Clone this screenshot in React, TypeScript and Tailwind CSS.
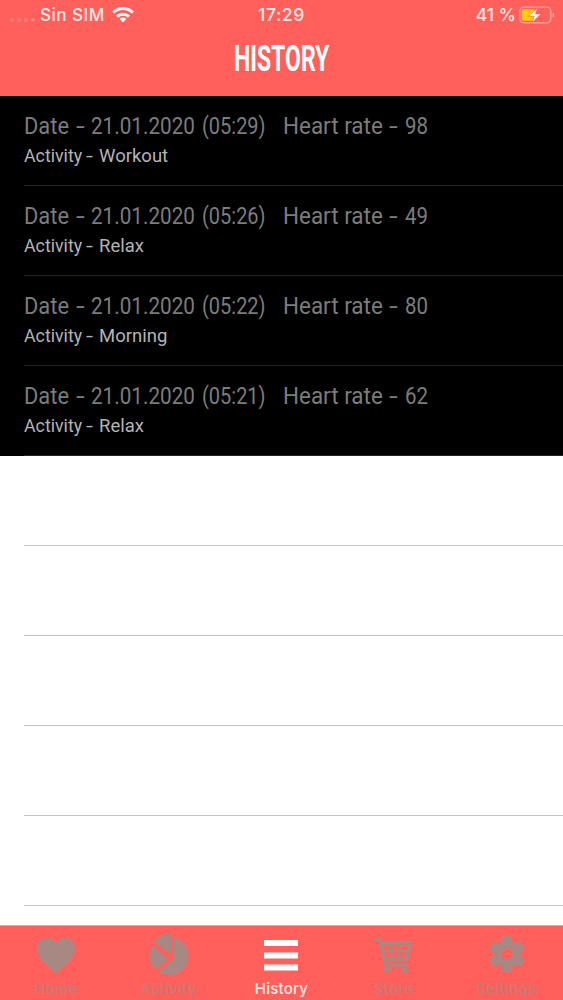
import type { ReactNode } from "react";

type Entry = { date: string; time: string; rate: number; activity: string };

const entries: Entry[] = [
  { date: "21.01.2020", time: "05:29", rate: 98, activity: "Workout" },
  { date: "21.01.2020", time: "05:26", rate: 49, activity: "Relax" },
  { date: "21.01.2020", time: "05:22", rate: 80, activity: "Morning" },
  { date: "21.01.2020", time: "05:21", rate: 62, activity: "Relax" },
];

function StatusBar() {
  return (
    <div className="grid h-[30px] grid-cols-3 items-center font-['Inter',sans-serif] text-[17px] font-medium text-[#ffe9e5]">
      <div className="flex items-center pl-[10px]">
        <div className="mt-[10px] flex gap-[3px]">
          {[0, 1, 2, 3].map((i) => (
            <span key={i} className="size-[4px] rounded-full bg-[#ff8078]" />
          ))}
        </div>
        <span className="ml-[5px] w-[66px] whitespace-nowrap pt-px tracking-[0.5px]">Sin SIM</span>
        <svg viewBox="0 0 22 16" className="ml-[6px] h-[16px] w-[22px]" fill="none" stroke="#fff4f1" strokeWidth="3">
          <path d="M1.2 5.600a14 14 0 0 1 19.600 0" />
          <path d="M5 9.600a8.600 8.600 0 0 1 12 0" />
          <path d="M11 15.500 7.600 12a4.800 4.800 0 0 1 6.800 0Z" fill="#fff4f1" stroke="none" />
        </svg>
      </div>
      <span className="text-center text-[17.5px] tracking-[0.6px]">17:29</span>
      <div className="flex items-center justify-end pr-[8px]">
        <span className="whitespace-nowrap text-[17.5px]">41 %</span>
        <svg viewBox="0 0 36 18" className="ml-[3px] h-[18px] w-[36px]">
          <rect x="0.8" y="1.2" width="31" height="15.600" rx="4" fill="none" stroke="#ffaaa0" strokeWidth="1.2" />
          <rect x="2.800" y="3.200" width="13" height="11.600" rx="2" fill="#ffcc0a" />
          <path d="M33.600 6.500c2 .8 2 4.200 0 5Z" fill="#ffaaa0" />
          <path d="M18.500 2 9.500 10.200h5.700L13 16.500l9.200-8.600h-5.800Z" fill="#fff" stroke="#ff6059" strokeWidth="0.7" />
        </svg>
      </div>
    </div>
  );
}

function HistoryRow({ entry }: { entry: Entry }) {
  return (
    <li className="h-[90px] bg-black pl-[24px] font-['Roboto',sans-serif]">
      <div className="h-full border-b border-[#242424] pt-[16px]">
        <div className="flex h-[29px] items-center whitespace-nowrap text-[23.5px] text-[#7c7c7c]">
          <span className="w-[52px]">
            <span className="inline-block origin-left scale-x-[0.93]">Date</span>
          </span>
          <span className="w-[15px]">
            <span className="inline-block origin-left scale-x-[1.35]">-</span>
          </span>
          <span className="w-[111px]">
            <span className="inline-block origin-left scale-x-[0.88]">{entry.date}</span>
          </span>
          <span className="w-[81px]">
            <span className="inline-block origin-left scale-x-[0.85]">({entry.time})</span>
          </span>
          <span className="w-[106px]">
            <span className="inline-block origin-left scale-x-[0.955]">Heart rate</span>
          </span>
          <span className="w-[16px]">
            <span className="inline-block origin-left scale-x-[1.35]">-</span>
          </span>
          <span className="inline-block origin-left scale-x-[0.87]">{entry.rate}</span>
        </div>
        <div className="flex h-[31px] items-center whitespace-nowrap text-[18.5px] text-[#b4b4b4]">
          <span className="w-[62px]">
            <span className="inline-block origin-left scale-x-[0.96]">Activity</span>
          </span>
          <span className="w-[13px]">
            <span className="inline-block origin-left scale-x-[1.35]">-</span>
          </span>
          <span className="inline-block origin-left">{entry.activity}</span>
        </div>
      </div>
    </li>
  );
}

function Tab({ label, active, children }: { label: string; active?: boolean; children: ReactNode }) {
  return (
    <div className={active ? "flex flex-1 flex-col items-center text-white" : "flex flex-1 flex-col items-center text-[#a78883]"}>
      <svg viewBox="0 0 44 44" className="mt-[7px] size-[44px]" fill="currentColor">
        {children}
      </svg>
      <span
        className={
          active
            ? "mt-[3px] text-[15px] leading-[18px] font-medium tracking-[0.25px] text-[#ffe9e5]"
            : "mt-[3px] text-[15px] leading-[18px] font-medium tracking-[0.25px] text-[#c87a74]"
        }
      >
        {label}
      </span>
    </div>
  );
}

export default function App() {
  return (
    <div className="flex h-[1000px] w-[563px] flex-col overflow-hidden bg-white">
      <header className="h-[96px] bg-[#ff605b]">
        <StatusBar />
        <h1 className="flex h-[59px] items-center justify-center font-['Roboto',sans-serif] text-[36.5px] font-bold text-white">
          <span className="inline-block scale-x-[0.63]">HISTORY</span>
        </h1>
      </header>
      <ul className="min-h-0 flex-1 overflow-hidden">
        {entries.map((entry) => (
          <HistoryRow key={entry.time} entry={entry} />
        ))}
        {[0, 1, 2, 3, 4].map((i) => (
          <li key={i} className="ml-[24px] h-[90px] border-b border-[#c4c4c6]" />
        ))}
      </ul>
      <nav className="flex h-[75px] border-t border-[#ff9d98] bg-[#ff605b] font-['Inter',sans-serif]">
        <Tab label="Home">
          <path d="M22 41C18 35.500 3 27 3 15.500C3 9 7.500 5 13 5c4 0 7.500 2 9 5.500C23.500 7 27 5 31 5c5.500 0 10 4 10 10.500C41 27 26 35.500 22 41Z" />
        </Tab>
        <Tab label="Activity">
          <g transform="translate(1.500 0)">
            <path d="M25.500 4.500a19 19 0 1 1-15.500 34L25.500 26Z" />
            <path d="M22.500 0.500v20.500L5.500 9.500A20 20 0 0 1 22.500 0.500Z" />
            <path d="M4 12.500 20 26 7.500 36.500A19 19 0 0 1 4 12.500Z" />
          </g>
        </Tab>
        <Tab label="History" active>
          <path d="M5 7h34v6H5ZM5 19.500h34v6H5ZM5 31.500h34v6H5Z" />
        </Tab>
        <Tab label="Store">
          <g fill="none" stroke="currentColor">
            <path d="M2.500 6.500h5.500l6 25.500h21.500" strokeWidth="3.200" />
            <path d="M8 10h29.500l-3 16H12" strokeWidth="3.600" />
            <path d="M11 18h24M18.500 10l1.500 16M27.500 10l-.5 16" strokeWidth="2" />
          </g>
          <circle cx="15" cy="37" r="3" />
          <circle cx="32.500" cy="37" r="3" />
        </Tab>
        <Tab label="Settings">
          <circle cx="22" cy="21" r="9.500" fill="none" stroke="currentColor" strokeWidth="8" />
          <rect x="17" y="3" width="10" height="9" rx="2.500" />
          <rect x="17" y="3" width="10" height="9" rx="2.500" transform="rotate(60 22 21)" />
          <rect x="17" y="3" width="10" height="9" rx="2.500" transform="rotate(120 22 21)" />
          <rect x="17" y="3" width="10" height="9" rx="2.500" transform="rotate(180 22 21)" />
          <rect x="17" y="3" width="10" height="9" rx="2.500" transform="rotate(240 22 21)" />
          <rect x="17" y="3" width="10" height="9" rx="2.500" transform="rotate(300 22 21)" />
        </Tab>
      </nav>
    </div>
  );
}
